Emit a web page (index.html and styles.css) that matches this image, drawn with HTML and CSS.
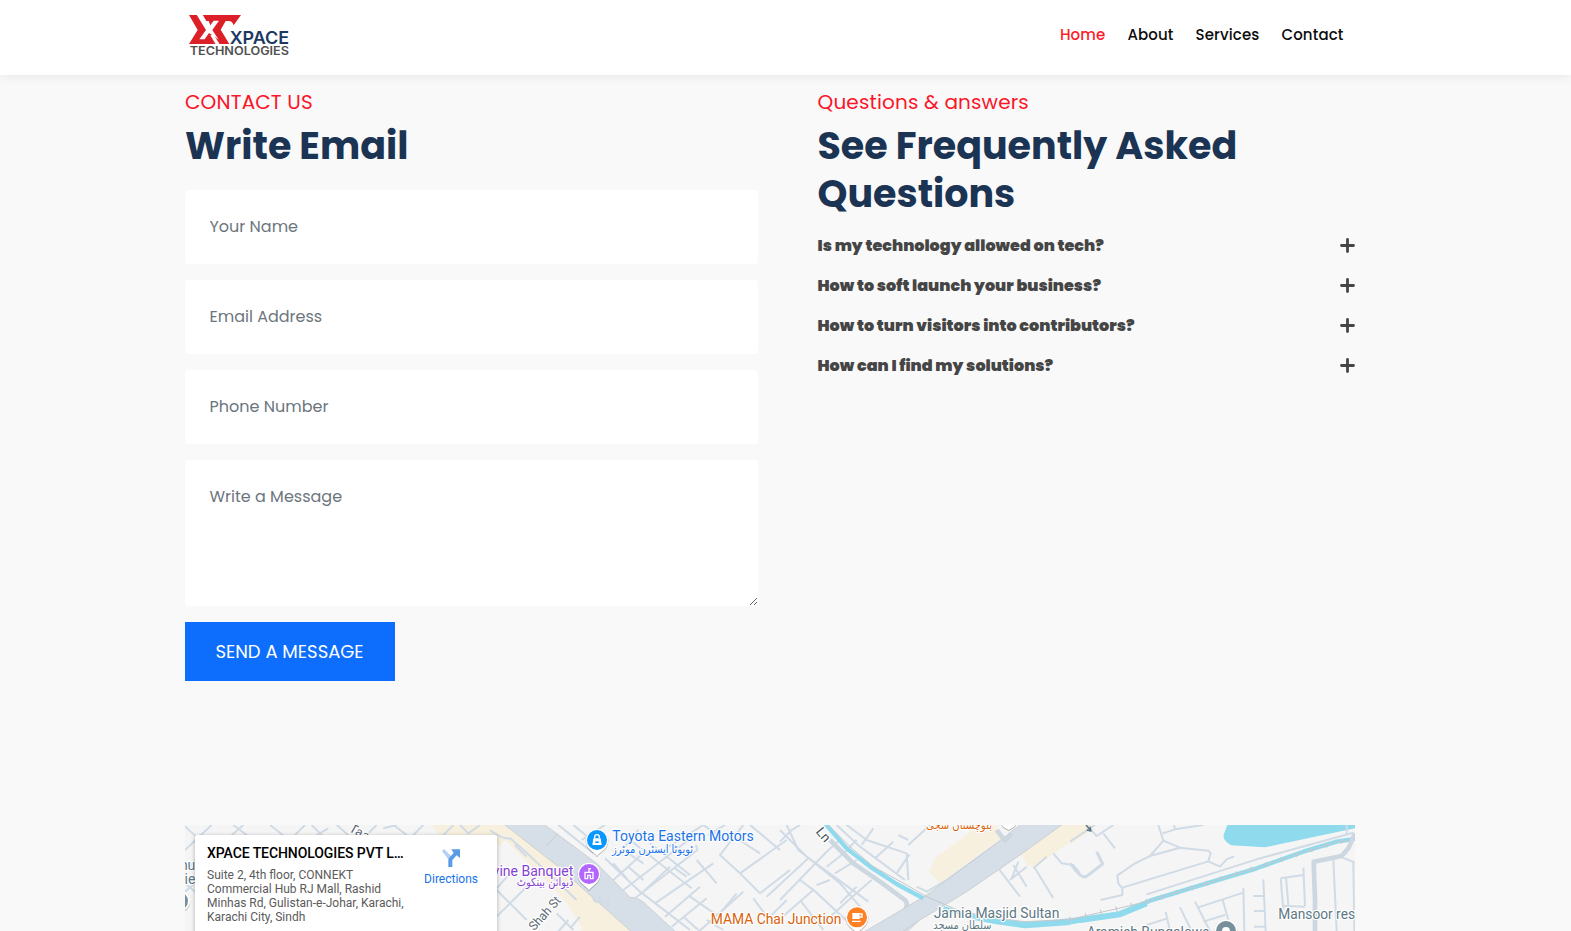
FILE: index.html
```html
<!DOCTYPE html>
<html lang="en">
<head>
<meta charset="utf-8">
<title>Xpace Technologies - Contact</title>
<link rel="stylesheet" href="styles.css">
</head>
<body>
<header class="header">
  <div class="container header-inner">
    <svg class="logo" viewBox="45 36 318 138" role="img" aria-label="Xpace Technologies">
      <path class="logo-red" d="M57 45H213L191 76Q187 63 176 63H167L152 89L178 132H57L83 90Z"/>
      <path class="logo-gap" d="M80 44H98L109 63H116L121 76L131 62H147L127 90L146 119L131 108L117 99L104 118H88L108 90L95 69Z"/>
      <path class="logo-gap" d="M121 106L131 104L149 133H137Z"/>
      <text class="logo-name" x="179" y="131" textLength="178" lengthAdjust="spacingAndGlyphs">XPACE</text>
      <text class="logo-sub" x="59" y="164" textLength="298" lengthAdjust="spacingAndGlyphs">TECHNOLOGIES</text>
    </svg>
    <nav class="nav">
      <a class="nav-link nav-home">Home</a>
      <a class="nav-link">About</a>
      <a class="nav-link">Services</a>
      <a class="nav-link">Contact</a>
    </nav>
  </div>
</header>

<main class="container">
  <div class="columns">
    <section class="contact">
      <p class="eyebrow">CONTACT US</p>
      <h2 class="title">Write Email</h2>
      <form class="form">
        <input class="field" type="text" placeholder="Your Name">
        <input class="field" type="text" placeholder="Email Address">
        <input class="field" type="text" placeholder="Phone Number">
        <textarea class="field field-area" placeholder="Write a Message"></textarea>
        <button class="send" type="button">SEND A MESSAGE</button>
      </form>
    </section>
    <section class="faq">
      <p class="eyebrow">Questions &amp; answers</p>
      <h2 class="title">See Frequently Asked<br>Questions</h2>
      <ul class="faq-list">
        <li class="faq-item"><span>Is my technology allowed on tech?</span><svg class="plus" viewBox="0 0 15 15"><path d="M7.5 1.5V13.5M1.5 7.5H13.5"/></svg></li>
        <li class="faq-item"><span>How to soft launch your business?</span><svg class="plus" viewBox="0 0 15 15"><path d="M7.5 1.5V13.5M1.5 7.5H13.5"/></svg></li>
        <li class="faq-item"><span>How to turn visitors into contributors?</span><svg class="plus" viewBox="0 0 15 15"><path d="M7.5 1.5V13.5M1.5 7.5H13.5"/></svg></li>
        <li class="faq-item"><span>How can I find my solutions?</span><svg class="plus" viewBox="0 0 15 15"><path d="M7.5 1.5V13.5M1.5 7.5H13.5"/></svg></li>
      </ul>
    </section>
  </div>

  <div class="map">
    <svg class="map-canvas" viewBox="15 15 3510 318">
      <rect class="land" x="0" y="0" width="3540" height="340"/>
      <!-- west -->
      <g>
        <path class="area" d="M755 15H1000L1130 120L1330 340H1210L1080 200L960 80L945 50H780Z"/>
        <path class="road" d="M15 90L95 15M10 15L60 60M160 15L220 60M150 50L190 15M270 15L315 50M345 45L375 15M395 15L430 50M410 45L445 25M470 15L510 50M590 15L560 45M610 25L650 15M640 15L680 45M700 45L730 15M840 15L865 40L900 15M15 190L45 215M15 215L45 190M45 120L25 150"/>
        <path class="road" d="M790 45L820 15"/>
      </g>
      <!-- main highway -->
      <g transform="translate(930 0)">
        <path class="area" d="M0 15H60L440 340H290L160 200L60 110L20 70L0 50Z"/>
        <path class="land" d="M45 60L180 195L230 250L280 330H20V90Z"/>
        <path class="highway" d="M45 15H165L320 130L420 232Q450 232 475 260L562 340H430L300 225L205 140Z"/>
        <path class="edge" d="M165 15L320 130L420 232Q450 232 475 260L562 340M45 15L205 140L300 225L430 340"/>
        <path class="edge" d="M168 78L205 40"/>
        <path class="road" d="M0 30Q40 60 60 55L95 85L260 240M20 100L0 130M20 290L130 180M20 210L110 300M60 160L20 205M200 280L250 330M235 300L200 340M270 290L240 325M75 75L110 110"/>
        <path class="loop" d="M312 225Q305 245 322 247Q338 240 325 225M338 238Q330 260 348 260Q362 252 350 236"/>
        <path class="road" d="M205 15L310 100M250 15L305 60M275 60L345 15M345 115L450 215L548 290L600 330M370 130L410 175M370 180L470 90M400 210L615 45M435 235L622 90L618 75M400 90L460 130M415 140L460 180M420 60L560 170L605 205M520 90L640 15M480 70L600 165M445 30L380 110M495 250L670 130M525 290L630 200M460 215L540 140M545 320L650 235M590 170L555 145M580 290L625 330M600 230L680 285M620 340L760 215M650 300L700 330"/>
        <path class="road" d="M640 15L690 50M655 45L705 15M760 15L690 105L750 160L810 220M750 160L890 60M725 45L810 100M780 15L870 90M810 220L900 150M790 235L835 295L890 240M690 280L740 220M620 120L680 190"/>
      </g>
      <!-- centre -->
      <g transform="translate(1800 0)">
        <path class="area" d="M447 155L465 115L600 15H645L665 55L480 190ZM720 95L830 15H900V45L765 140L740 135Z"/>
        <path class="road" d="M0 65L35 30L60 15M0 30L80 110L265 245M-40 230L85 115M20 15L55 90L180 190L240 260M0 240L145 90L180 60M110 195L150 180M60 180L100 210L-15 310M95 205L230 330M60 240L130 330M140 140L210 85M165 160L230 120M150 290L240 210L275 180M180 250L230 200M200 15L260 60L380 100L385 180M170 15L240 80L375 180M245 75L280 25M285 115L340 65M230 60L200 90M350 160L388 103M355 45L385 60M385 75L450 15M410 200L440 215L500 180L665 60"/>
        <path class="road-wide" d="M150 60L220 130L300 185L372 238Q385 245 378 268"/>
        <path class="highway" d="M245 340L440 225L650 70L700 30L720 15H845L720 105L560 215L420 300L380 340Z"/>
        <path class="edge" d="M245 340L440 225L650 70L700 30L720 15M845 15L720 105L560 215L420 300L360 340"/>
        <path class="road-wide" d="M650 30L675 62L695 40"/>
        <path class="canal" d="M135 10L200 85L270 140L350 192L430 235M490 265L560 283L650 302L735 314L800 308L900 298"/>
        <path class="canal canal-thick" d="M560 287L650 304L735 316L870 306"/>
        <path class="rail" d="M140 10L210 80L280 140L380 195L440 230L520 265L610 290L735 305L900 297"/>
        <path class="road" d="M655 145L720 230M690 180L740 140M700 135L740 200M765 145L820 235M715 125L695 175M820 100L845 130L880 135L900 160M760 145L800 110"/>
      </g>
      <!-- east -->
      <g transform="translate(2670 0)">
        <path class="area" d="M0 15H65L55 35L0 75Z"/>
        <path class="water" d="M472 15H855V25L585 82L483 76Q455 60 462 42Z"/>
        <path class="canal" d="M0 307L150 280L240 242L420 187L560 145L700 95L800 65L860 56"/>
        <path class="canal canal-thick" d="M30 300L150 283L230 250"/>
        <path class="rail" d="M0 298L150 264L240 242L420 187L560 143L700 97L800 66L860 56"/>
        <path class="rail-ties" d="M0 298L150 264L240 242L420 187L560 143L700 97L800 66L860 56"/>
        <path class="road" d="M0 65L75 15M50 15L80 48L130 15M100 40L135 85M265 15L280 62L330 83L415 92L422 100L415 124L450 140L470 118L492 109M280 62L240 108L195 130L142 166L145 190L157 205V225L92 240M278 40L315 28L400 15M312 15L315 28M240 108L330 83M157 203L415 124M230 223L560 118L850 38M830 15V42"/>
        <path class="road road-med" d="M0 130L20 155Q40 180 55 165L98 132L80 95"/>
        <path class="road-wide" d="M735 340V240L731 125L815 108L835 85L855 40"/>
        <path class="road" d="M375 245L420 333M385 262L520 218M520 203L523 333M400 305L465 285M458 240L475 300M330 262L365 333M287 275L300 333M230 315L290 296M550 228H585M580 178L587 333M552 273H585M552 320H587M632 175L700 165M632 175L640 270M648 172L655 255M700 143L705 258M640 257L705 260M790 120L800 333M815 112L855 128M850 128L853 333"/>
      </g>

      <!-- place labels -->
      <g class="labels">
        <text class="street" transform="translate(505 32) rotate(30)" font-size="38">Tar</text>
        <text class="street" transform="translate(543 52) rotate(30)" font-size="36">an</text>
        <text class="poi" x="46" y="149" text-anchor="end">nu</text>
        <text class="poi" x="46" y="192" text-anchor="end">sie</text>
        <g transform="translate(930 0)">
          <text class="blue" x="367" y="64" textLength="424" lengthAdjust="spacingAndGlyphs">Toyota Eastern Motors</text>
          <text class="blue arabic" x="366" y="98" textLength="243" lengthAdjust="spacingAndGlyphs">ٹویوٹا ایسٹرن موٹرز</text>
          <text class="purple" x="-30" y="169" textLength="280" lengthAdjust="spacingAndGlyphs">Divine Banquet</text>
          <text class="purple arabic" x="80" y="199" textLength="170" lengthAdjust="spacingAndGlyphs">ڈیوائن بینکوٹ</text>
          <text class="street" transform="translate(133 334) rotate(-48)" textLength="122" lengthAdjust="spacingAndGlyphs" font-size="38">Shah St</text>
          <text class="orange" x="662" y="312" textLength="392" lengthAdjust="spacingAndGlyphs">MAMA Chai Junction</text>
          <g transform="translate(321 60)">
            <path class="pin-edge" d="M0 49C-8 36 -34 28 -34 0A34 34 0 0 1 34 0C34 28 8 36 0 49Z"/>
            <circle class="pin-blue" r="30"/>
            <path class="pin-glyph" d="M-11 -5H11L14 15H-14Z"/><path class="pin-line" d="M-7 -5V-9A7 7 0 0 1 7 -9V-5"/><path class="pin-mark" d="M-5 4H5V9H-5Z"/>
          </g>
          <g transform="translate(297 162)">
            <path class="pin-edge" d="M0 49C-8 36 -34 28 -34 0A34 34 0 0 1 34 0C34 28 8 36 0 49Z"/>
            <circle class="pin-purple" r="30"/>
            <path class="pin-line" d="M-12 14V-5H12V14H4V4H-4V14ZM0 -5V-16H6"/>
          </g>
        </g>
        <g transform="translate(1800 0)">
          <g transform="translate(231 292)">
            <path class="pin-edge" d="M0 49C-8 36 -34 28 -34 0A34 34 0 0 1 34 0C34 28 8 36 0 49Z"/>
            <circle class="pin-orange" r="30"/>
            <path class="pin-glyph" d="M-14 -13H8V5H-14ZM-15 10H11V14H-15Z"/><path class="pin-line" d="M8 -10H15V-1H8"/>
          </g>
          <path class="pin-edge" d="M662 10H710Q705 22 686 30Q667 22 662 10Z"/>
          <text class="street street-dark" transform="translate(106 36) rotate(50)" font-size="40">Ln</text>
          <text class="orange arabic" x="438" y="26" textLength="198" lengthAdjust="spacingAndGlyphs">بلوچستان سجی</text>
          <text class="poi" x="461" y="293" textLength="377" lengthAdjust="spacingAndGlyphs">Jamia Masjid Sultan</text>
          <text class="poi arabic" x="460" y="327" textLength="174" lengthAdjust="spacingAndGlyphs">سلطان مسجد</text>
        </g>
        <g transform="translate(2670 0)">
          <path class="arrow" d="M48 15L62 32M60 20L63 33L50 30"/>
          <text class="poi" x="50" y="352" textLength="368" lengthAdjust="spacingAndGlyphs">Aramish Bungalows</text>
          <text class="poi" x="625" y="298" textLength="240" lengthAdjust="spacingAndGlyphs">Mansoor resi</text>
          <circle class="pin-edge" cx="468" cy="333" r="35"/><circle class="pin-grey" cx="468" cy="333" r="30"/><circle class="dot" cx="468" cy="333" r="12"/>
        </g>
        <circle class="pin-edge" cx="0" cy="243" r="31"/><circle class="pin-grey" cx="-4" cy="243" r="28"/>
      </g>
    </svg>

    <div class="place-card">
      <div class="place-text">
        <strong class="place-name">XPACE TECHNOLOGIES PVT L…</strong>
        <p class="place-address">Suite 2, 4th floor, CONNEKT<br>Commercial Hub RJ Mall, Rashid<br>Minhas Rd, Gulistan-e-Johar, Karachi,<br>Karachi City, Sindh</p>
      </div>
      <div class="directions">
        <svg class="directions-icon" viewBox="0 0 54 54"><path class="dir-light" d="M0 6L6 0L28 22L20 32Z"/><path class="dir-main" d="M19 54V34Q19 29 23 25L35 12L28 1H54V27L44 19L31 33V54Z"/></svg>
        <a class="directions-link">Directions</a>
      </div>
    </div>
  </div>
</main>
</body>
</html>
```
FILE: styles.css
```css
* { box-sizing: border-box; }
body { margin: 0; height: 931px; overflow: hidden; background: #f9f9f9; font-family: Poppins, Inter, "Open Sans", sans-serif; color: #1b3454; }
.container { width: 1170px; margin: 0 auto 0 185px; }
.header { position: relative; height: 75px; background: #fff; box-shadow: 0 2px 10px rgba(0, 0, 0, .07); }
.header-inner { display: flex; justify-content: space-between; }
.logo { width: 106px; height: 46px; margin-top: 12px; }
.logo-red { fill: #dc2027; }
.logo-gap { fill: #fff; }
.logo-name { font: 600 52px Inter, sans-serif; fill: #1b3a63; }
.logo-sub { font: 600 35px Inter, sans-serif; fill: #505050; }
.nav { display: flex; gap: 22px; padding: 23px 11.5px 0 0; }
.nav-link { font-size: 15px; font-weight: 500; line-height: 24px; letter-spacing: .12px; color: #0c0c0c; }
.nav-home { color: #fb1d2a; }

.columns { display: grid; grid-template-columns: 573px 537.5px; column-gap: 59.5px; height: 750px; padding-top: 12px; }
.eyebrow { margin: 0; font-size: 20px; line-height: 30px; letter-spacing: .15px; color: #fb1528; }
.title { margin: 5px 0 0; font-size: 38px; font-weight: 700; line-height: 48px; white-space: nowrap; }
.form { display: flex; flex-direction: column; align-items: flex-start; gap: 16px; margin-top: 20px; }
.field { display: block; width: 573px; height: 74px; margin: 0; padding: 0 24.5px 2px; border: 0; border-radius: 4px; background: #fff; font: 16px/24px Poppins, Inter, sans-serif; outline: 0; }
.field::placeholder { color: #6c757d; opacity: 1; }
.field-area { height: 146px; padding-top: 25px; resize: vertical; }
.send { width: 210px; height: 59px; padding: 0 1px 0 0; border: 0; background: #0d6efd; color: #fff; font: 18px/27px Poppins, Inter, sans-serif; }
.faq-list { display: flex; flex-direction: column; gap: 16px; margin: 15px 0 0; padding: 0; list-style: none; }
.faq-item { display: flex; align-items: center; justify-content: space-between; height: 24px; font-size: 16px; font-weight: 900; color: #454545; white-space: nowrap; }
.plus { width: 15px; height: 15px; }
.plus path { fill: none; stroke: #454545; stroke-width: 2.8; stroke-linecap: round; }

.map { position: relative; height: 106px; overflow: hidden; }
.map-canvas { display: block; width: 1170px; height: 106px; }
.land { fill: #f5f5f5; }
.area { fill: #f7f0df; }
.water { fill: #90daee; }
.highway { fill: #d6dfe7; }
.edge { fill: none; stroke: #bfc4c9; stroke-width: 2; }
.road, .loop, .road-wide, .canal, .rail, .rail-ties, .arrow { fill: none; stroke-linejoin: round; }
.road { stroke: #d0dbe6; stroke-width: 6; }
.road-med { stroke-width: 9; }
.road-wide { stroke: #cdd7e0; stroke-width: 14; }
.loop { stroke: #d0dbe6; stroke-width: 5; }
.canal { stroke: #90daee; stroke-width: 13; }
.canal-thick { stroke-width: 18; }
.rail { stroke: #c4c8cc; stroke-width: 3; }
.rail-ties { stroke: #c4c8cc; stroke-width: 16; stroke-dasharray: 3 44; }
.arrow { stroke: #5f7380; stroke-width: 4; }
.labels text { font-family: Roboto, sans-serif; paint-order: stroke; stroke: #fff; stroke-width: 7; stroke-linejoin: round; }
.labels .street { fill: #5a6772; }
.labels .street-dark { fill: #46525e; }
.poi { fill: #5d7884; font-size: 42px; }
.blue { fill: #1a73e8; font-size: 43px; }
.purple { fill: #8541d4; font-size: 43px; }
.orange { fill: #d9630c; font-size: 43px; }
.labels .arabic { font-family: "DejaVu Sans", sans-serif; font-size: 34px; }
.pin-edge { fill: #fff; filter: drop-shadow(0 2px 2px rgba(0, 0, 0, .4)); }
.pin-blue { fill: #0a98ff; }
.pin-purple { fill: #b266ff; }
.pin-orange { fill: #ff8126; }
.pin-grey { fill: #78909c; }
.pin-glyph, .dot { fill: #fff; }
.pin-mark { fill: #0a98ff; }
.pin-line { fill: none; stroke: #fff; stroke-width: 4; }

.place-card { position: absolute; left: 10px; top: 10px; width: 302px; height: 130px; display: flex; justify-content: space-between; padding: 9px 19px 0 12px; border-radius: 2px; background: #fff; box-shadow: 0 1px 4px rgba(0, 0, 0, .3); font-family: Roboto, sans-serif; }
.place-name { display: block; font-size: 14px; font-weight: 500; line-height: 19px; letter-spacing: -.08px; color: #000; white-space: nowrap; }
.place-address { margin: 5px 0 0; font-size: 12px; line-height: 14px; color: #5b5b5b; white-space: nowrap; }
.directions { display: flex; flex-direction: column; align-items: center; padding-top: 5px; }
.directions-icon { width: 18px; height: 18px; }
.dir-light { fill: #b3d1f8; }
.dir-main { fill: #5a9be8; }
.directions-link { margin-top: 5px; font-size: 12px; line-height: 14px; color: #1a73e8; }
```
